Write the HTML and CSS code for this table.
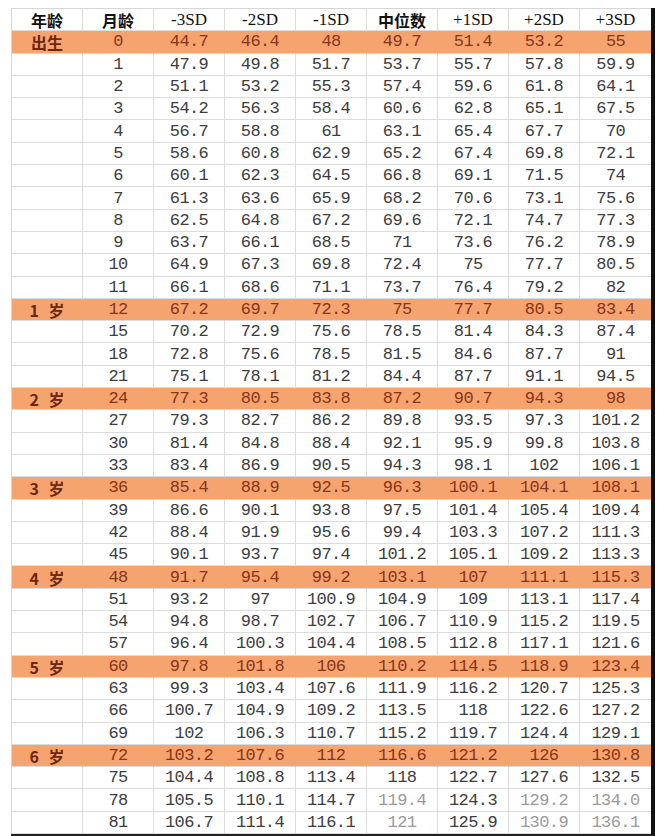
FILE: index.html
```html
<!DOCTYPE html>
<html lang="zh-CN">
<head>
<meta charset="utf-8">
<title>身高标准表</title>
<link rel="stylesheet" href="styles.css">
</head>
<body>
<div class="sheet">
<table class="grid">
<tr class="head"><td class="cn">年龄</td><td class="cn">月龄</td><td>-3SD</td><td>-2SD</td><td>-1SD</td><td class="cn">中位数</td><td>+1SD</td><td>+2SD</td><td>+3SD</td></tr>
<tr class="hl"><td class="age">出生</td><td>0</td><td>44.7</td><td>46.4</td><td>48</td><td>49.7</td><td>51.4</td><td>53.2</td><td>55</td></tr>
<tr><td></td><td>1</td><td>47.9</td><td>49.8</td><td>51.7</td><td>53.7</td><td>55.7</td><td>57.8</td><td>59.9</td></tr>
<tr><td></td><td>2</td><td>51.1</td><td>53.2</td><td>55.3</td><td>57.4</td><td>59.6</td><td>61.8</td><td>64.1</td></tr>
<tr><td></td><td>3</td><td>54.2</td><td>56.3</td><td>58.4</td><td>60.6</td><td>62.8</td><td>65.1</td><td>67.5</td></tr>
<tr><td></td><td>4</td><td>56.7</td><td>58.8</td><td>61</td><td>63.1</td><td>65.4</td><td>67.7</td><td>70</td></tr>
<tr><td></td><td>5</td><td>58.6</td><td>60.8</td><td>62.9</td><td>65.2</td><td>67.4</td><td>69.8</td><td>72.1</td></tr>
<tr><td></td><td>6</td><td>60.1</td><td>62.3</td><td>64.5</td><td>66.8</td><td>69.1</td><td>71.5</td><td>74</td></tr>
<tr><td></td><td>7</td><td>61.3</td><td>63.6</td><td>65.9</td><td>68.2</td><td>70.6</td><td>73.1</td><td>75.6</td></tr>
<tr><td></td><td>8</td><td>62.5</td><td>64.8</td><td>67.2</td><td>69.6</td><td>72.1</td><td>74.7</td><td>77.3</td></tr>
<tr><td></td><td>9</td><td>63.7</td><td>66.1</td><td>68.5</td><td>71</td><td>73.6</td><td>76.2</td><td>78.9</td></tr>
<tr><td></td><td>10</td><td>64.9</td><td>67.3</td><td>69.8</td><td>72.4</td><td>75</td><td>77.7</td><td>80.5</td></tr>
<tr><td></td><td>11</td><td>66.1</td><td>68.6</td><td>71.1</td><td>73.7</td><td>76.4</td><td>79.2</td><td>82</td></tr>
<tr class="hl"><td class="age">1 岁</td><td>12</td><td>67.2</td><td>69.7</td><td>72.3</td><td>75</td><td>77.7</td><td>80.5</td><td>83.4</td></tr>
<tr><td></td><td>15</td><td>70.2</td><td>72.9</td><td>75.6</td><td>78.5</td><td>81.4</td><td>84.3</td><td>87.4</td></tr>
<tr><td></td><td>18</td><td>72.8</td><td>75.6</td><td>78.5</td><td>81.5</td><td>84.6</td><td>87.7</td><td>91</td></tr>
<tr><td></td><td>21</td><td>75.1</td><td>78.1</td><td>81.2</td><td>84.4</td><td>87.7</td><td>91.1</td><td>94.5</td></tr>
<tr class="hl"><td class="age">2 岁</td><td>24</td><td>77.3</td><td>80.5</td><td>83.8</td><td>87.2</td><td>90.7</td><td>94.3</td><td>98</td></tr>
<tr><td></td><td>27</td><td>79.3</td><td>82.7</td><td>86.2</td><td>89.8</td><td>93.5</td><td>97.3</td><td>101.2</td></tr>
<tr><td></td><td>30</td><td>81.4</td><td>84.8</td><td>88.4</td><td>92.1</td><td>95.9</td><td>99.8</td><td>103.8</td></tr>
<tr><td></td><td>33</td><td>83.4</td><td>86.9</td><td>90.5</td><td>94.3</td><td>98.1</td><td>102</td><td>106.1</td></tr>
<tr class="hl"><td class="age">3 岁</td><td>36</td><td>85.4</td><td>88.9</td><td>92.5</td><td>96.3</td><td>100.1</td><td>104.1</td><td>108.1</td></tr>
<tr><td></td><td>39</td><td>86.6</td><td>90.1</td><td>93.8</td><td>97.5</td><td>101.4</td><td>105.4</td><td>109.4</td></tr>
<tr><td></td><td>42</td><td>88.4</td><td>91.9</td><td>95.6</td><td>99.4</td><td>103.3</td><td>107.2</td><td>111.3</td></tr>
<tr><td></td><td>45</td><td>90.1</td><td>93.7</td><td>97.4</td><td>101.2</td><td>105.1</td><td>109.2</td><td>113.3</td></tr>
<tr class="hl"><td class="age">4 岁</td><td>48</td><td>91.7</td><td>95.4</td><td>99.2</td><td>103.1</td><td>107</td><td>111.1</td><td>115.3</td></tr>
<tr><td></td><td>51</td><td>93.2</td><td>97</td><td>100.9</td><td>104.9</td><td>109</td><td>113.1</td><td>117.4</td></tr>
<tr><td></td><td>54</td><td>94.8</td><td>98.7</td><td>102.7</td><td>106.7</td><td>110.9</td><td>115.2</td><td>119.5</td></tr>
<tr><td></td><td>57</td><td>96.4</td><td>100.3</td><td>104.4</td><td>108.5</td><td>112.8</td><td>117.1</td><td>121.6</td></tr>
<tr class="hl"><td class="age">5 岁</td><td>60</td><td>97.8</td><td>101.8</td><td>106</td><td>110.2</td><td>114.5</td><td>118.9</td><td>123.4</td></tr>
<tr><td></td><td>63</td><td>99.3</td><td>103.4</td><td>107.6</td><td>111.9</td><td>116.2</td><td>120.7</td><td>125.3</td></tr>
<tr><td></td><td>66</td><td>100.7</td><td>104.9</td><td>109.2</td><td>113.5</td><td>118</td><td>122.6</td><td>127.2</td></tr>
<tr><td></td><td>69</td><td>102</td><td>106.3</td><td>110.7</td><td>115.2</td><td>119.7</td><td>124.4</td><td>129.1</td></tr>
<tr class="hl"><td class="age">6 岁</td><td>72</td><td>103.2</td><td>107.6</td><td>112</td><td>116.6</td><td>121.2</td><td>126</td><td>130.8</td></tr>
<tr><td></td><td>75</td><td>104.4</td><td>108.8</td><td>113.4</td><td>118</td><td>122.7</td><td>127.6</td><td>132.5</td></tr>
<tr><td></td><td>78</td><td>105.5</td><td>110.1</td><td>114.7</td><td class="faded">119.4</td><td>124.3</td><td class="faded">129.2</td><td class="faded">134.0</td></tr>
<tr><td></td><td>81</td><td>106.7</td><td>111.4</td><td>116.1</td><td class="faded">121</td><td>125.9</td><td class="faded">130.9</td><td class="faded">136.1</td></tr>
</table>
</div>
</body>
</html>
```

FILE: styles.css
```css
body {
  margin: 0;
  background: #ffffff;
}

.sheet {
  display: inline-block;
  margin: 8px 0 0 11px;
  border-right: 4px solid #111111;
  border-bottom: 2px solid #222222;
}

.grid {
  border-collapse: separate;
  border-spacing: 0;
  table-layout: fixed;
  width: 640px;
  border-top: 1px solid #d6d6d6;
  border-left: 1px solid #d6d6d6;
}

.grid tr {
  height: 22.3px;
}

.grid td {
  padding: 1px 0 0;
  height: 20.3px;
  border-right: 1px solid #dcdcdc;
  border-bottom: 1px solid #dcdcdc;
  text-align: center;
  vertical-align: middle;
  font-family: "Liberation Mono", "Noto Sans CJK SC", monospace;
  font-size: 17px;
  letter-spacing: -0.6px;
  line-height: 18px;
  color: #3d3d3d;
  white-space: nowrap;
}

.grid td:last-child {
  border-right: none;
}

.head td {
  color: #111111;
  font-family: "Liberation Serif", "Noto Sans CJK SC", serif;
  font-size: 17px;
  letter-spacing: 0;
}

.head td.cn {
  font-family: "Noto Sans CJK SC", sans-serif;
  font-weight: 700;
  font-size: 16px;
}

.hl td {
  background: #f5a470;
  border-right-color: #f5a470;
  color: #8a3418;
}

.hl td.age {
  font-family: "Noto Sans CJK SC", sans-serif;
  font-weight: 700;
  font-size: 16px;
  letter-spacing: 0;
  word-spacing: 6px;
  color: #6e2710;
}

.grid td.faded {
  color: #9a9a9a;
}
```
